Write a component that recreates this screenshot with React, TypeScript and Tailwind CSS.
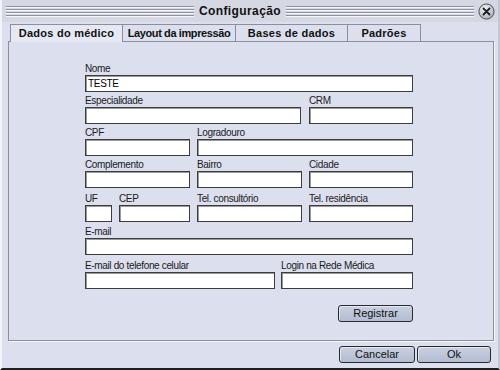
import React from 'react';

const font = { fontFamily: '"Liberation Sans", Arial, sans-serif' };

const TitleLines = () => (
  <div className="flex-1 flex flex-col gap-[1px]">
    {[0, 1, 2, 3].map(i => (
      <div key={i} className="flex flex-col">
        <div className="h-px bg-[#8e929e]"></div>
        <div className="h-px bg-[#f6f7fb]"></div>
      </div>
    ))}
  </div>
);

const CloseIcon = () => (
  <svg width="17" height="17" viewBox="0 0 17 17">
    <defs>
      <radialGradient id="cg" cx="40%" cy="35%" r="70%">
        <stop offset="0%" stopColor="#f4f5f8" />
        <stop offset="100%" stopColor="#a9adb8" />
      </radialGradient>
    </defs>
    <circle cx="8.5" cy="8.5" r="7.6" fill="url(#cg)" stroke="#4a4d55" strokeWidth="1" />
    <path d="M5.5 5.5 L11.5 11.5 M11.5 5.5 L5.5 11.5" stroke="#1c1d22" strokeWidth="1.8" strokeLinecap="round" />
  </svg>
);

interface FieldProps {
  label: string;
  w: string;
  value?: string;
}

const Field: React.FC<FieldProps> = ({ label, w, value }) => (
  <div className={`${w} shrink-0 flex flex-col`}>
    <div className="h-[15px] pt-[3px] leading-[12px] text-[10px] tracking-[-0.35px] text-[#1a1a1a] whitespace-nowrap">{label}</div>
    <div className="h-[17px] bg-white border border-[#3c3c3c] shadow-[inset_1px_1px_0_#9a9a9a] px-[2px] text-[10px] tracking-[-0.3px] leading-[15px] text-black">
      {value}
    </div>
  </div>
);

const Btn: React.FC<{ label: string; w: string }> = ({ label, w }) => (
  <button className={`${w} h-[17px] rounded-[3px] border border-[#2a2a2a] bg-gradient-to-b from-[#c9d0e0] to-[#b3bcd2] text-[11px] leading-[15px] text-[#111] shadow-[inset_1px_1px_0_#e4e8f2]`}>
    {label}
  </button>
);

const tabs = [
  { label: 'Dados do médico', w: 'w-[112px]', cls: 'tracking-[0.25px]' },
  { label: 'Layout da impressão', w: 'w-[113px]', cls: 'tracking-[-0.4px]' },
  { label: 'Bases de dados', w: 'w-[112px]', cls: 'tracking-[0.25px]' },
  { label: 'Padrões', w: 'w-[74px]', cls: 'tracking-[0.25px]' },
];

export default function App() {
  return (
    <div
      style={font}
      className="w-[500px] h-[370px] bg-[#dcdfee] border-l-2 border-l-[#f3f4f9] border-r-2 border-r-[#c4c7d2] border-b-2 border-b-[#1e1e22] flex flex-col overflow-hidden"
    >
      {/* Title bar */}
      <div className="h-[22px] shrink-0 bg-[#d5d8e3] flex items-center pl-[4px] pr-[3px] gap-[4px]">
        <TitleLines />
        <span className="text-[12px] font-bold tracking-[0.4px] text-[#111] px-[1px]">Configuração</span>
        <TitleLines />
        <CloseIcon />
      </div>

      {/* Tabs */}
      <div className="mt-[2px] ml-[6px] mr-[4px] flex flex-col">
        <div className="h-[17px] flex pl-[2px]">
          {tabs.map((t, i) => (
            <div
              key={t.label}
              className={`${t.w} h-[17px] border-t border-l border-[#8c8f9a] ${i === tabs.length - 1 ? 'border-r' : ''} ${i === 0 ? 'bg-[#e6e9f3] relative z-10 h-[18px]' : 'bg-[#dcdfee]'} flex items-center justify-center text-[11px] font-bold text-[#111] ${t.cls}`}
            >
              {t.label}
            </div>
          ))}
        </div>
        <div className="h-[300px] border border-[#8c8f9a] shadow-[1px_1px_0_#f6f7fb] pt-[18px] pl-[76px] flex flex-col">
          <div className="w-[328px] flex flex-col">
            <div className="flex">
              <Field label="Nome" w="w-[328px]" value="TESTE" />
            </div>
            <div className="flex gap-[8px]">
              <Field label="Especialidade" w="w-[216px]" />
              <Field label="CRM" w="w-[104px]" />
            </div>
            <div className="flex gap-[7px]">
              <Field label="CPF" w="w-[105px]" />
              <Field label="Logradouro" w="w-[216px]" />
            </div>
            <div className="flex gap-[7px]">
              <Field label="Complemento" w="w-[105px]" />
              <Field label="Bairro" w="w-[105px]" />
              <Field label="Cidade" w="w-[104px]" />
            </div>
            <div className="flex gap-[7px] mt-[2px]">
              <Field label="UF" w="w-[27px]" />
              <Field label="CEP" w="w-[71px]" />
              <Field label="Tel. consultório" w="w-[105px]" />
              <Field label="Tel. residência" w="w-[104px]" />
            </div>
            <div className="flex mt-[1px]">
              <Field label="E-mail" w="w-[328px]" />
            </div>
            <div className="flex gap-[6px] mt-[2px]">
              <Field label="E-mail do telefone celular" w="w-[190px]" />
              <Field label="Login na Rede Médica" w="w-[132px]" />
            </div>
            <div className="flex justify-end mt-[16px]">
              <Btn label="Registrar" w="w-[75px]" />
            </div>
          </div>
        </div>
      </div>

      {/* Footer */}
      <div className="flex justify-end gap-[2px] pt-[5px] pr-[7px]">
        <Btn label="Cancelar" w="w-[76px]" />
        <Btn label="Ok" w="w-[74px]" />
      </div>
    </div>
  );
}
